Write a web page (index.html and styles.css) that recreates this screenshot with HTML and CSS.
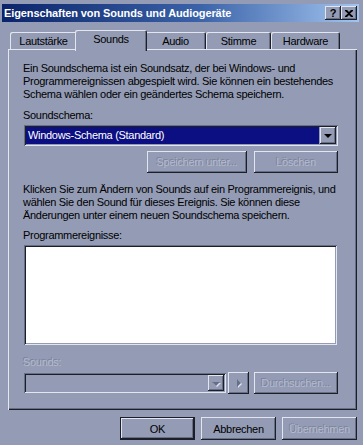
FILE: index.html
```html
<!DOCTYPE html>
<html lang="de">
<head>
<meta charset="utf-8">
<title>Eigenschaften von Sounds und Audiogeräte</title>
<link rel="stylesheet" href="styles.css">
</head>
<body>
<div class="window">
  <div class="titlebar">
    <span class="title">Eigenschaften von Sounds und Audiogeräte</span>
    <div class="tbtns">
      <span class="tbtn help">?</span>
      <span class="tbtn close">
        <svg width="8" height="7" viewBox="0 0 8 7"><path d="M0 0h2l2 2 2-2h2v1L5 3.5 8 6v1H6L4 5 2 7H0V6l3-2.5L0 1z" fill="#000"/></svg>
      </span>
    </div>
  </div>
  <div class="content">
    <div class="tabs">
      <span class="tab w1">Lautstärke</span>
      <span class="tab w2 active">Sounds</span>
      <span class="tab w3">Audio</span>
      <span class="tab w4">Stimme</span>
      <span class="tab w5">Hardware</span>
    </div>
    <div class="panel">
      <p class="desc">Ein Soundschema ist ein Soundsatz, der bei Windows- und<br>Programmereignissen abgespielt wird. Sie können ein bestehendes<br>Schema wählen oder ein geändertes Schema speichern.</p>
      <div class="label lbl-schema">Soundschema:</div>
      <div class="select">
        <span class="select-value">Windows-Schema (Standard)</span>
        <span class="drop"><span class="tri"></span></span>
      </div>
      <div class="row row-right">
        <span class="btn disabled w-save">Speichern unter...</span>
        <span class="btn disabled w-std">Löschen</span>
      </div>
      <p class="desc desc2">Klicken Sie zum Ändern von Sounds auf ein Programmereignis, und<br>wählen Sie den Sound für dieses Ereignis. Sie können diese<br>Änderungen unter einem neuen Soundschema speichern.</p>
      <div class="label lbl-events">Programmereignisse:</div>
      <div class="list"></div>
      <div class="label disabled lbl-sounds">Sounds:</div>
      <div class="row row-sounds">
        <div class="combo">
          <span class="drop"><span class="tri tri-dis"></span></span>
        </div>
        <span class="btn play"><span class="play-tri"></span></span>
        <span class="btn disabled w-std">Durchsuchen...</span>
      </div>
    </div>
    <div class="footer">
      <span class="btn default w-foot">OK</span>
      <span class="btn w-foot">Abbrechen</span>
      <span class="btn disabled w-foot">Übernehmen</span>
    </div>
  </div>
</div>
</body>
</html>
```

FILE: styles.css
```css
html, body {
  margin: 0;
  padding: 0;
}
body {
  width: 363px;
  height: 445px;
  overflow: hidden;
  background: #949cb5;
  font-family: "Liberation Sans", Arial, sans-serif;
  font-size: 11px;
  letter-spacing: -0.3px;
  color: #000;
}
.window {
  width: 363px;
  height: 445px;
  box-sizing: border-box;
  padding: 4px 4px 0 2px;
  background: #949cb5;
}
.titlebar {
  height: 18px;
  display: flex;
  align-items: center;
  justify-content: space-between;
  background: linear-gradient(to right, #0a246a 0%, #3a62a8 55%, #a2c4ee 100%);
  padding: 0 2px 0 2px;
}
.title {
  color: #fff;
  font-weight: bold;
  font-size: 11px;
  letter-spacing: -0.1px;
  line-height: 18px;
  white-space: nowrap;
}
.tbtns {
  display: flex;
}
.tbtn {
  width: 16px;
  height: 14px;
  box-sizing: border-box;
  background: #949cb5;
  box-shadow: inset -1px -1px #1c1e28, inset 1px 1px #e3e6ee, inset -2px -2px #676f87;
  display: flex;
  align-items: center;
  justify-content: center;
  font-weight: bold;
  font-size: 11px;
  letter-spacing: 0;
  line-height: 14px;
  color: #000;
}
.tbtn.help {
  padding-bottom: 1px;
}
.content {
  padding: 8px 0 0 6px;
}
.tabs {
  display: flex;
  height: 19px;
  padding-left: 2px;
  position: relative;
  z-index: 2;
}
.tab {
  height: 17px;
  margin-top: 2px;
  box-sizing: border-box;
  display: flex;
  align-items: center;
  justify-content: center;
  padding-top: 1px;
  background: #949cb5;
  border-radius: 2px 2px 0 0;
  box-shadow: inset 1px 1px #e3e6ee, inset -1px 0 #1c1e28, inset -2px 0 #676f87;
  white-space: nowrap;
}
.w1 { width: 67px; }
.w2 { width: 68px; }
.w3 { width: 61px; }
.w4 { width: 65px; }
.w5 { width: 69px; }
.tab.active {
  width: 72px;
  height: 21px;
  margin: 0 -2px;
  padding-top: 0;
  padding-bottom: 3px;
  position: relative;
  z-index: 3;
}
.panel {
  width: 349px;
  height: 361px;
  box-sizing: border-box;
  padding: 13px 19px 0 16px;
  background: #949cb5;
  box-shadow: inset 1px 1px #e3e6ee, inset -1px -1px #1c1e28, inset -2px -2px #676f87;
  position: relative;
  z-index: 1;
}
.desc {
  margin: 0;
  line-height: 13px;
  margin-left: -1px;
  white-space: nowrap;
}
.desc2 {
  margin-top: 10px;
}
.label {
  line-height: 13px;
  margin-left: -1px;
}
.lbl-schema {
  margin-top: 8px;
}
.lbl-events {
  margin-top: 7px;
}
.lbl-sounds {
  margin-top: 11px;
}
.disabled {
  color: #b4bace;
  text-shadow: -1px -1px 0 #7a829a;
}
.select {
  margin-top: 3px;
  height: 21px;
  box-sizing: border-box;
  display: flex;
  align-items: center;
  padding: 2px;
  background: #949cb5;
  box-shadow: inset 1px 1px #676f87, inset -1px -1px #e3e6ee, inset 2px 2px #1c1e28, inset -2px -2px #949cb5;
}
.select-value {
  flex: 1;
  height: 17px;
  line-height: 17px;
  background: #0c0f82;
  color: #fff;
  padding-left: 2px;
  margin-right: 1px;
  font-size: 11px;
}
.drop {
  width: 16px;
  height: 17px;
  box-sizing: border-box;
  background: #949cb5;
  box-shadow: inset -1px -1px #1c1e28, inset 1px 1px #e3e6ee, inset -2px -2px #676f87;
  display: flex;
  align-items: center;
  justify-content: center;
}
.tri {
  width: 0;
  height: 0;
  border-left: 4px solid transparent;
  border-right: 4px solid transparent;
  border-top: 4px solid #000;
  margin-top: 1px;
}
.tri-dis {
  border-top-color: #676f87;
  filter: drop-shadow(1px 1px 0 #e3e6ee);
}
.row {
  display: flex;
}
.row-right {
  justify-content: flex-end;
  margin-top: 5px;
  gap: 7px;
}
.btn {
  height: 22px;
  box-sizing: border-box;
  display: flex;
  align-items: center;
  justify-content: center;
  background: #949cb5;
  box-shadow: inset -1px -1px #1c1e28, inset 1px 1px #e3e6ee, inset -2px -2px #676f87;
  white-space: nowrap;
}
.w-save { width: 100px; }
.w-std { width: 84px; }
.list {
  margin-top: 3px;
  height: 100px;
  width: 313px;
  box-sizing: border-box;
  background: #fff;
  box-shadow: inset 1px 1px #676f87, inset -1px -1px #e3e6ee, inset 2px 2px #1c1e28, inset -2px -2px #949cb5;
}
.row-sounds {
  margin-top: 3px;
  align-items: center;
}
.combo {
  width: 203px;
  height: 20px;
  box-sizing: border-box;
  padding: 2px;
  display: flex;
  justify-content: flex-end;
  background: #949cb5;
  box-shadow: inset 1px 1px #676f87, inset -1px -1px #e3e6ee, inset 2px 2px #1c1e28, inset -2px -2px #949cb5;
}
.combo .drop {
  height: 16px;
}
.play {
  width: 21px;
  margin-left: 2px;
  margin-right: 5px;
}
.play-tri {
  width: 0;
  height: 0;
  border-top: 4px solid transparent;
  border-bottom: 4px solid transparent;
  border-left: 4px solid #676f87;
  filter: drop-shadow(1px 1px 0 #e3e6ee);
}
.footer {
  display: flex;
  justify-content: flex-end;
  gap: 6px;
  margin-top: 7px;
  width: 349px;
}
.w-foot {
  width: 75px;
  height: 23px;
}
.btn.default {
  box-shadow: inset 0 0 0 1px #1c1e28, inset -2px -2px #1c1e28, inset 2px 2px #e3e6ee, inset -3px -3px #676f87;
}
```
